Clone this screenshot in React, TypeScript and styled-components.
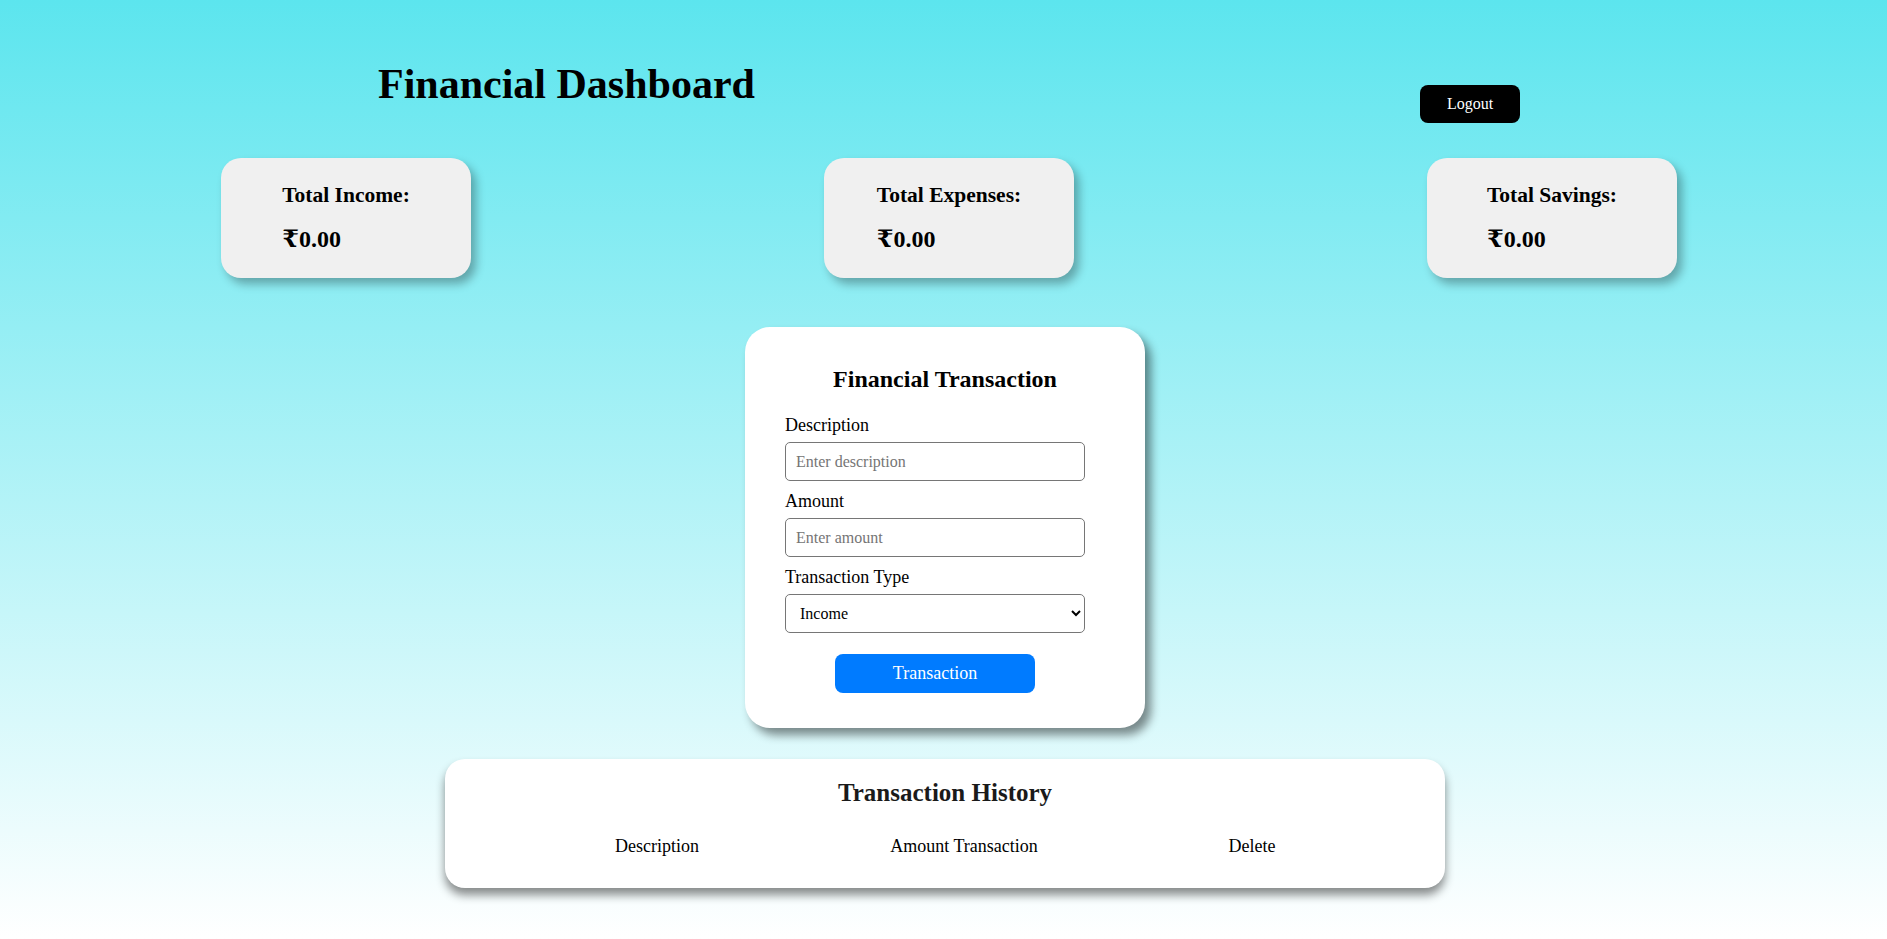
import React from "react";
import styled, { createGlobalStyle } from "styled-components";

const GlobalStyle = createGlobalStyle`
  html, body {
    margin: 0;
    padding: 0;
  }
  body {
    font-family: "Liberation Serif", "Times New Roman", "DejaVu Serif", serif;
    color: #000;
  }
  * {
    box-sizing: border-box;
  }
`;

const Page = styled.div`
  min-height: 100vh;
  background: linear-gradient(180deg, #5ce5ee 0%, #ffffff 100%);
  padding-bottom: 40px;
`;

const Header = styled.header`
  display: flex;
  align-items: flex-start;
  padding: 60px 367px 0 378px;
`;

const Title = styled.h1`
  margin: 0;
  font-size: 42px;
  font-weight: bold;
`;

const LogoutButton = styled.button`
  margin-left: auto;
  margin-top: 25px;
  width: 100px;
  height: 38px;
  border: none;
  border-radius: 8px;
  background: #000;
  color: #fff;
  font-family: inherit;
  font-size: 16px;
  cursor: pointer;
`;

const SummaryRow = styled.section`
  display: flex;
  justify-content: space-between;
  padding: 0 210px 0 221px;
  margin-top: 35px;
`;

const SummaryCard = styled.div`
  width: 250px;
  height: 120px;
  background: #f0f0f0;
  border-radius: 20px;
  box-shadow: 5px 6px 10px rgba(0, 0, 0, 0.3);
  display: flex;
  align-items: center;
  justify-content: center;
`;

const CardBody = styled.div`
  text-align: left;
`;

const CardLabel = styled.h3`
  margin: 0;
  font-size: 21.5px;
  font-weight: bold;
`;

const CardValue = styled.p`
  margin: 16px 0 0;
  font-size: 24px;
  font-weight: bold;
`;

const Main = styled.main`
  padding-left: 3px;
`;

const FormCard = styled.div`
  width: 400px;
  margin: 49px auto 0;
  padding: 20px 20px 20px;
  background: #fff;
  border-radius: 25px;
  box-shadow: 6px 7px 10px rgba(0, 0, 0, 0.45);
`;

const FormTitle = styled.h2`
  margin: 19px 0 22px;
  font-size: 24px;
  font-weight: bold;
  text-align: center;
`;

const Form = styled.form`
  width: 300px;
  margin: 0 0 15px 20px;
`;

const Label = styled.label`
  display: block;
  font-size: 18px;
  margin-bottom: 6px;
`;

const TextInput = styled.input`
  display: block;
  width: 300px;
  height: 39px;
  padding: 0 10px;
  margin: 0 0 10px;
  border: 1px solid #767676;
  border-radius: 5px;
  font-family: inherit;
  font-size: 16px;
  background: #fff;
  &::placeholder {
    color: #757575;
  }
`;

const Select = styled.select`
  display: block;
  width: 300px;
  height: 39px;
  padding: 0 6px 0 10px;
  margin: 0;
  border: 1px solid #767676;
  border-radius: 5px;
  font-family: inherit;
  font-size: 16px;
  color: #000;
  background: #fff;
`;

const ButtonRow = styled.div`
  display: flex;
  justify-content: center;
  margin-top: 21px;
`;

const SubmitButton = styled.button`
  width: 200px;
  height: 39px;
  border: none;
  border-radius: 8px;
  background: #007bff;
  color: #fff;
  font-family: inherit;
  font-size: 18px;
  cursor: pointer;
`;

const HistoryCard = styled.div`
  width: 1000px;
  margin: 31px auto 0;
  padding: 20px 0 20px;
  background: #fff;
  border-radius: 20px;
  box-shadow: 0 7px 10px rgba(0, 0, 0, 0.45);
`;

const HistoryTitle = styled.h2`
  margin: 0;
  font-size: 25px;
  font-weight: bold;
  text-align: center;
  color: #1a1a1a;
`;

const Table = styled.table`
  width: 800px;
  margin: 29px auto 11px;
  border-collapse: collapse;
  table-layout: fixed;
`;

const HeadCell = styled.th<{ $width: number }>`
  width: ${(p) => p.$width}px;
  padding: 0;
  font-size: 18px;
  font-weight: normal;
  text-align: center;
`;

export default function App() {
  const summaries = [
    { label: "Total Income:", value: "₹0.00" },
    { label: "Total Expenses:", value: "₹0.00" },
    { label: "Total Savings:", value: "₹0.00" },
  ];

  return (
    <Page>
      <GlobalStyle />
      <Header>
        <Title>Financial Dashboard</Title>
        <LogoutButton type="button">Logout</LogoutButton>
      </Header>

      <SummaryRow>
        {summaries.map((s) => (
          <SummaryCard key={s.label}>
            <CardBody>
              <CardLabel>{s.label}</CardLabel>
              <CardValue>{s.value}</CardValue>
            </CardBody>
          </SummaryCard>
        ))}
      </SummaryRow>

      <Main>
        <FormCard>
          <FormTitle>Financial Transaction</FormTitle>
          <Form onSubmit={(e) => e.preventDefault()}>
            <Label htmlFor="desc">Description</Label>
            <TextInput id="desc" type="text" placeholder="Enter description" />
            <Label htmlFor="amount">Amount</Label>
            <TextInput id="amount" type="number" placeholder="Enter amount" />
            <Label htmlFor="type">Transaction Type</Label>
            <Select id="type" defaultValue="income">
              <option value="income">Income</option>
              <option value="expense">Expense</option>
            </Select>
            <ButtonRow>
              <SubmitButton type="submit">Transaction</SubmitButton>
            </ButtonRow>
          </Form>
        </FormCard>

        <HistoryCard>
          <HistoryTitle>Transaction History</HistoryTitle>
          <Table>
            <thead>
              <tr>
                <HeadCell $width={224}>Description</HeadCell>
                <HeadCell $width={390}>Amount Transaction</HeadCell>
                <HeadCell $width={186}>Delete</HeadCell>
              </tr>
            </thead>
          </Table>
        </HistoryCard>
      </Main>
    </Page>
  );
}
